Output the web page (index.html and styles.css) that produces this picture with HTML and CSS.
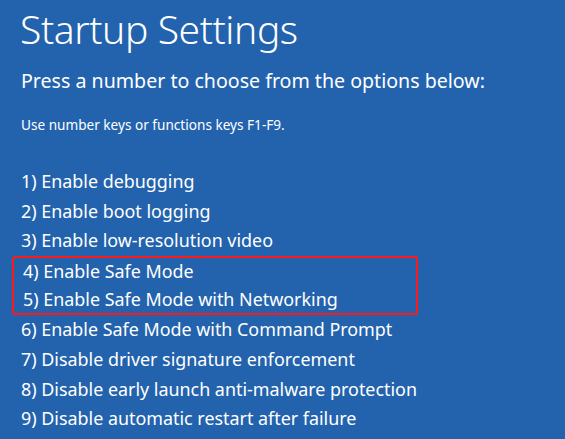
FILE: index.html
```html
<!DOCTYPE html>
<html>
<head>
<meta charset="utf-8">
<link rel="stylesheet" href="styles.css">
</head>
<body>
<main class="screen">
  <h1 class="title">Startup Settings</h1>
  <p class="lead">Press a number to choose from the options below:</p>
  <p class="hint">Use number keys or functions keys F1-F9.</p>
  <ul class="options">
    <li>1) Enable debugging</li>
    <li>2) Enable boot logging</li>
    <li>3) Enable low-resolution video</li>
    <li class="group">
      <ul class="highlight">
        <li>4) Enable Safe Mode</li>
        <li>5) Enable Safe Mode with Networking</li>
      </ul>
    </li>
    <li>6) Enable Safe Mode with Command Prompt</li>
    <li>7) Disable driver signature enforcement</li>
    <li>8) Disable early launch anti-malware protection</li>
    <li>9) Disable automatic restart after failure</li>
  </ul>
</main>
</body>
</html>
```
FILE: styles.css
```css
html, body {
  margin: 0;
  padding: 0;
  background: #2363ae;
}
.screen {
  width: 565px;
  height: 439px;
  overflow: hidden;
  box-sizing: border-box;
  padding: 2px 0 0 20px;
  color: #ffffff;
  font-family: "Noto Sans", "Open Sans", sans-serif;
  display: flex;
  flex-direction: column;
}
.title {
  margin: 0;
  font-size: 39px;
  font-weight: 300;
  line-height: 54px;
  letter-spacing: -0.4px;
}
.lead {
  margin: 12px 0 0 1px;
  font-size: 19.6px;
  line-height: 26px;
}
.hint {
  margin: 21px 0 0 1px;
  font-size: 13.6px;
  line-height: 20px;
}
.options {
  list-style: none;
  margin: 32px 0 0 0;
  padding: 0;
  font-size: 17.9px;
  line-height: 29.6px;
}
.options li {
  padding-left: 1px;
  white-space: nowrap;
}
.options .group {
  padding: 0;
}
.highlight {
  list-style: none;
  margin: 0 0 0 -8px;
  padding: 0 0 0 8px;
  width: 406px;
  height: 59.6px;
  border: 2px solid #ff1a1a;
  border-radius: 3px;
  box-sizing: border-box;
  display: flex;
  flex-direction: column;
  justify-content: center;
}
.highlight li {
  line-height: 27.8px;
}
```
